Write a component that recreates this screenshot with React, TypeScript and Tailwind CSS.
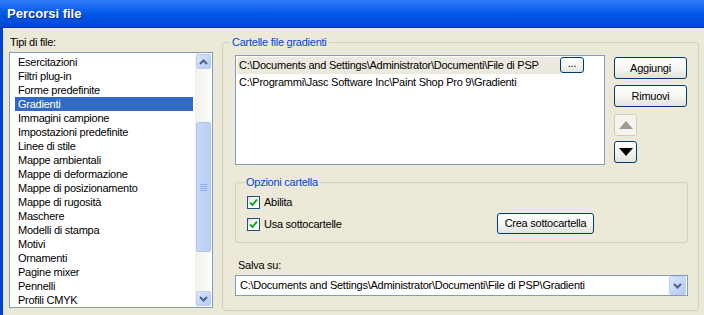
import React from "react";

const types = [
  "Esercitazioni",
  "Filtri plug-in",
  "Forme predefinite",
  "Gradienti",
  "Immagini campione",
  "Impostazioni predefinite",
  "Linee di stile",
  "Mappe ambientali",
  "Mappe di deformazione",
  "Mappe di posizionamento",
  "Mappe di rugosità",
  "Maschere",
  "Modelli di stampa",
  "Motivi",
  "Ornamenti",
  "Pagine mixer",
  "Pennelli",
  "Profili CMYK",
];

function Chevron({ up }: { up?: boolean }) {
  return (
    <svg width="9" height="6" viewBox="0 0 9 6">
      <path
        d={up ? "M1 5 L4.5 1.5 L8 5" : "M1 1 L4.5 4.5 L8 1"}
        fill="none"
        stroke="#4D6185"
        strokeWidth="2"
      />
    </svg>
  );
}

function ScrollArrow({ up }: { up?: boolean }) {
  return (
    <div className="h-[17px] w-[17px] p-[1px]">
      <div className="w-full h-full rounded-[2px] border border-[#BCCDF4] bg-gradient-to-br from-[#DCE6FD] to-[#B5C9F4] flex items-center justify-center">
        <Chevron up={up} />
      </div>
    </div>
  );
}

function XpButton({ children, className }: { children: React.ReactNode; className?: string }) {
  return (
    <div
      className={
        "border border-[#003C74] rounded-[3px] bg-gradient-to-b from-white via-[#F6F6F3] to-[#E3E2DA] flex items-center justify-center text-black " +
        (className || "")
      }
    >
      {children}
    </div>
  );
}

function Checkbox({ label }: { label: string }) {
  return (
    <div className="flex items-center h-[13px]">
      <div className="w-[13px] h-[13px] border border-[#1C5180] bg-gradient-to-br from-[#DCDCD7] via-white to-white flex items-center justify-center">
        <svg width="9" height="9" viewBox="0 0 9 9">
          <path d="M1 4.5 L3.5 7 L8 1.5" fill="none" stroke="#21A121" strokeWidth="2" />
        </svg>
      </div>
      <span className="ml-[4px] leading-[13px]">{label}</span>
    </div>
  );
}

export default function App() {
  return (
    <div
      className="w-[704px] h-[315px] overflow-hidden bg-[#ECE9D8] text-[11px] tracking-[-0.25px] text-black"
      style={{ fontFamily: '"Liberation Sans", Arial, sans-serif' }}
    >
      <div className="h-[28px] bg-gradient-to-b from-[#2E7BF6] via-[#0058E8] to-[#0047D3] border-b border-[#0037B0] flex items-center pl-[7px]">
        <span className="text-white font-bold text-[13px] tracking-normal [text-shadow:1px_1px_0_#0A2C8A]">
          Percorsi file
        </span>
      </div>

      <div className="flex items-start h-[287px] border-l-[3px] border-[#0044D6] pl-[6px] pt-[7px]">
        <div className="w-[204px]">
          <div className="h-[14px] leading-[14px] pl-[1px]">Tipi di file:</div>
          <div className="mt-[3px] h-[256px] border border-[#7F9DB9] bg-white flex">
            <div className="flex-1 pt-[2px] pl-[5px] pr-[2px]">
              {types.map((t, i) => (
                <div
                  key={t}
                  className={
                    "h-[14px] leading-[14px] pl-[3px] whitespace-nowrap " +
                    (i === 3 ? "bg-[#316AC5] text-white" : "")
                  }
                >
                  {t}
                </div>
              ))}
            </div>
            <div className="w-[17px] flex flex-col bg-gradient-to-r from-[#F3F1EC] to-[#FEFEFB]">
              <ScrollArrow up />
              <div className="flex-1 px-[1px]">
                <div className="mt-[52px] h-[130px] rounded-[2px] border border-[#B1C4EF] bg-gradient-to-r from-[#C9D8FC] to-[#B9CDF6] flex flex-col items-center justify-center gap-[1px]">
                  {[0, 1, 2, 3].map((k) => (
                    <div key={k} className="w-[7px] h-[1px] bg-[#EEF4FE] border-b border-[#8CB0F8]"></div>
                  ))}
                </div>
              </div>
              <ScrollArrow />
            </div>
          </div>
        </div>

        <div className="relative ml-[9px] mt-[7px] w-[477px] h-[269px] border border-[#D0D0BF] rounded-[3px] pl-[12px] pt-[12px]">
          <div className="absolute -top-[7px] left-[7px] px-[2px] bg-[#ECE9D8] leading-[13px] text-[#0046D5]">
            Cartelle file gradienti
          </div>

          <div className="flex">
            <div className="w-[370px] h-[110px] border border-[#7F9DB9] bg-white pt-[1px] pl-[1px]">
              <div className="flex h-[17px] items-start">
                <div className="w-[323px] h-[17px] bg-[#ECEADF] leading-[17px] pl-[2px] whitespace-nowrap">
                  C:\Documents and Settings\Administrator\Documenti\File di PSP
                </div>
                <XpButton className="w-[24px] h-[16px] leading-[10px] pb-[4px]">...</XpButton>
              </div>
              <div className="h-[17px] leading-[17px] pl-[2px] whitespace-nowrap">
                C:\Programmi\Jasc Software Inc\Paint Shop Pro 9\Gradienti
              </div>
            </div>

            <div className="ml-[9px] pt-[2px] flex flex-col">
              <XpButton className="w-[73px] h-[22px]">Aggiungi</XpButton>
              <XpButton className="mt-[6px] w-[73px] h-[22px]">Rimuovi</XpButton>
              <div className="mt-[7px] w-[23px] h-[22px] rounded-[3px] border border-[#CFCDC0] bg-[#F4F3EE] flex items-center justify-center">
                <svg width="14" height="8" viewBox="0 0 14 8">
                  <path d="M7 0 L14 8 L0 8 Z" fill="#9F9D92" />
                </svg>
              </div>
              <XpButton className="mt-[5px] w-[23px] h-[22px]">
                <svg width="14" height="8" viewBox="0 0 14 8">
                  <path d="M0 0 L14 0 L7 8 Z" fill="#000" />
                </svg>
              </XpButton>
            </div>
          </div>

          <div className="relative mt-[17px] w-[453px] h-[61px] border border-[#D0D0BF] rounded-[3px] flex pl-[11px] pt-[13px]">
            <div className="absolute -top-[7px] left-[8px] px-[2px] bg-[#ECE9D8] leading-[13px] text-[#0046D5]">
              Opzioni cartella
            </div>
            <div className="w-[250px] flex flex-col gap-[9px]">
              <Checkbox label="Abilita" />
              <Checkbox label="Usa sottocartelle" />
            </div>
            <XpButton className="mt-[17px] w-[97px] h-[21px]">Crea sottocartella</XpButton>
          </div>

          <div className="mt-[15px] h-[14px] leading-[14px] pl-[3px]">Salva su:</div>
          <div className="mt-[3px] w-[453px] h-[21px] border border-[#7F9DB9] bg-white flex items-center">
            <div className="flex-1 pl-[4px] whitespace-nowrap">
              C:\Documents and Settings\Administrator\Documenti\File di PSP\Gradienti
            </div>
            <div className="w-[17px] h-[19px] mr-[1px] rounded-[2px] border border-[#BCCDF4] bg-gradient-to-br from-[#DCE6FD] to-[#B5C9F4] flex items-center justify-center">
              <Chevron />
            </div>
          </div>
        </div>
      </div>
    </div>
  );
}
